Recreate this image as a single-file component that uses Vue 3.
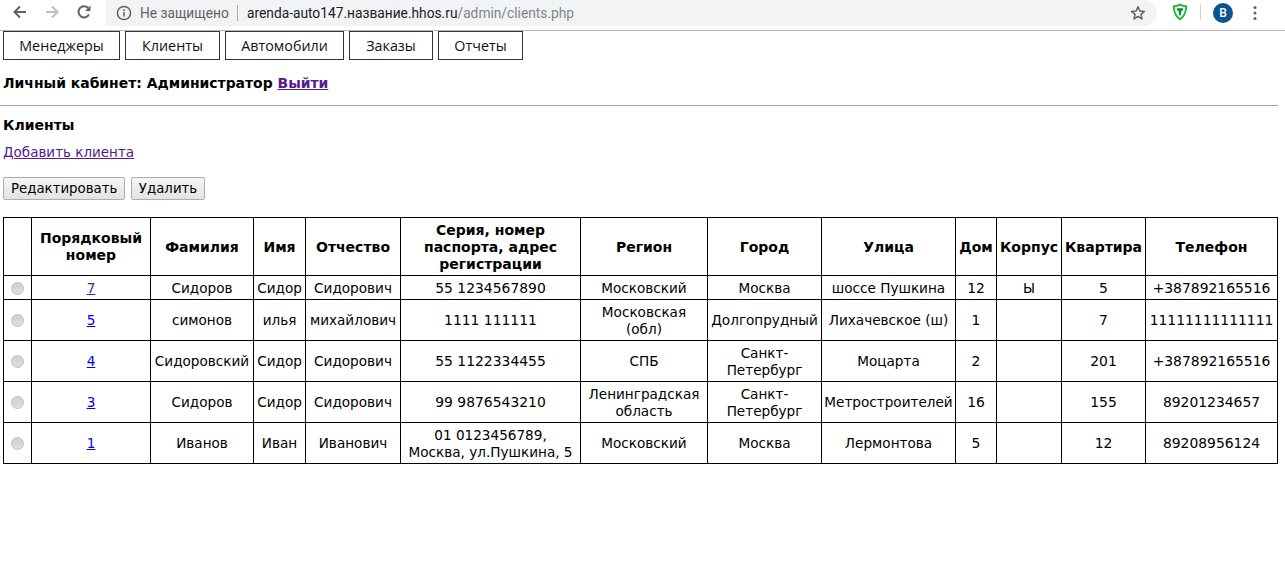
<script setup>
const tabs = [
  { label: 'Менеджеры', width: 117 },
  { label: 'Клиенты', width: 95 },
  { label: 'Автомобили', width: 119 },
  { label: 'Заказы', width: 84 },
  { label: 'Отчеты', width: 85 }
]
const colWidths = [28, 119, 103, 52, 95, 180, 127, 114, 134, 41, 65, 84, 132]
const headers = ['', 'Порядковый номер', 'Фамилия', 'Имя', 'Отчество', 'Серия, номер паспорта, адрес регистрации', 'Регион', 'Город', 'Улица', 'Дом', 'Корпус', 'Квартира', 'Телефон']
const rows = [
  { id: '7', visited: true, cells: ['Сидоров', 'Сидор', 'Сидорович', '55 1234567890', 'Московский', 'Москва', 'шоссе Пушкина', '12', 'Ы', '5', '+387892165516'] },
  { id: '5', cells: ['симонов', 'илья', 'михайлович', '1111 111111', 'Московская\n(обл)', 'Долгопрудный', 'Лихачевское (ш)', '1', '', '7', '11111111111111'] },
  { id: '4', cells: ['Сидоровский', 'Сидор', 'Сидорович', '55 1122334455', 'СПБ', 'Санкт-Петербург', 'Моцарта', '2', '', '201', '+387892165516'] },
  { id: '3', cells: ['Сидоров', 'Сидор', 'Сидорович', '99 9876543210', 'Ленинградская область', 'Санкт-Петербург', 'Метростроителей', '16', '', '155', '89201234657'] },
  { id: '1', cells: ['Иванов', 'Иван', 'Иванович', '01 0123456789,\nМосква, ул.Пушкина, 5', 'Московский', 'Москва', 'Лермонтова', '5', '', '12', '89208956124'] }
]
const isNumeric = (c) => /^[\d +]+$/.test(c)
</script>

<template>
  <div class="page">
    <header class="chrome">
      <div class="navicons">
        <svg width="16" height="16" viewBox="0 0 16 16" class="ic"><path d="M14 8H3M8 2.5 2.5 8 8 13.5" fill="none" stroke="#5f6368" stroke-width="2"/></svg>
        <svg width="16" height="16" viewBox="0 0 16 16" class="ic"><path d="M2 8h11M8 2.5 13.5 8 8 13.5" fill="none" stroke="#bcbec1" stroke-width="2"/></svg>
        <svg width="16" height="16" viewBox="0 0 16 16" class="ic"><path d="M13 10.5A5.6 5.6 0 1 1 12.2 4" fill="none" stroke="#5f6368" stroke-width="2"/><path d="M14.5 1.5v5.5H9z" fill="#5f6368"/></svg>
      </div>
      <div class="omnibox">
        <svg width="16" height="16" viewBox="0 0 16 16" class="info"><circle cx="8" cy="8" r="6.6" fill="none" stroke="#5f6368" stroke-width="1.5"/><path d="M7.2 7h1.6v4.6H7.2zM7.2 4.3h1.6v1.6H7.2z" fill="#5f6368"/></svg>
        <span class="insecure">Не защищено</span>
        <span class="divider"></span>
        <span class="url"><span class="host">arenda-auto147.название.hhos.ru</span>/admin/clients.php</span>
        <svg width="16" height="16" viewBox="0 0 16 16" class="star"><path d="M8 1.8 9.8 6l4.6.4-3.5 3 1.1 4.5L8 11.5l-4 2.4 1.1-4.5-3.5-3L6.200 6z" fill="none" stroke="#5f6368" stroke-width="1.5" stroke-linejoin="round"/></svg>
      </div>
      <div class="ext">
        <svg width="16" height="18" viewBox="0 0 16 18" class="shield"><path d="M.8 2.600C3.500 2.500 5.500 1.800 8 .6c2.500 1.200 4.500 1.900 7.200 2C15.200 9 13 14.500 8 17.400 3 14.500.8 9 .8 2.600z" fill="#22b83c"/><path d="M2.800 4.200c1.800-.1 3.500-.6 5.200-1.400 1.700.8 3.400 1.300 5.200 1.400 0 4-1.500 8.200-5.200 10.800C4.300 12.400 2.800 8.200 2.800 4.200z" fill="#e9f8ec"/><path d="M5 5.200h6v2.200H9.500L8.600 12.500H7.400L6.500 7.400H5z" fill="#1f7d4a"/></svg>
        <span class="sep"></span>
        <span class="avatar">В</span>
        <svg width="4" height="16" viewBox="0 0 4 16" class="dots"><circle cx="2" cy="2.500" r="1.500"/><circle cx="2" cy="8" r="1.500"/><circle cx="2" cy="13.500" r="1.500"/></svg>
      </div>
    </header>

    <nav class="tabs">
      <a v-for="t in tabs" :key="t.label" class="tab" :style="{ width: t.width + 'px' }">{{ t.label }}</a>
    </nav>

    <p class="cabinet">Личный кабинет: Администратор <a href="#" class="visited">Выйти</a></p>
    <hr class="rule" />
    <p class="title">Клиенты</p>
    <p class="add"><a href="#" class="visited">Добавить клиента</a></p>
    <div class="actions">
      <button class="btn">Редактировать</button>
      <button class="btn">Удалить</button>
    </div>

    <table class="grid">
      <colgroup>
        <col v-for="(w, i) in colWidths" :key="i" :style="{ width: w + 'px' }" />
      </colgroup>
      <thead>
        <tr><th v-for="(h, i) in headers" :key="i">{{ h }}</th></tr>
      </thead>
      <tbody>
        <tr v-for="r in rows" :key="r.id">
          <td><input type="radio" disabled class="radio" /></td>
          <td><a href="#" :class="r.visited ? 'visited' : 'fresh'">{{ r.id }}</a></td>
          <td v-for="(c, i) in r.cells" :key="i" :class="{ num: isNumeric(c) }">{{ c }}</td>
        </tr>
      </tbody>
    </table>
  </div>
</template>

<style scoped>
.page {
  width: 1285px;
  height: 578px;
  overflow: hidden;
  background: #fff;
  font-family: "DejaVu Sans", Verdana, sans-serif;
  font-size: 13.33px;
  line-height: 17px;
  color: #000;
}
.chrome {
  height: 30px;
  border-bottom: 1px solid #b7b7b7;
  display: flex;
  box-sizing: content-box;
  font-family: Roboto, "Liberation Sans", sans-serif;
}
.navicons {
  width: 106px;
  display: flex;
  align-items: flex-start;
  padding: 4px 0 0 12px;
  gap: 16px;
  box-sizing: border-box;
}
.ic { display: block; }
.omnibox {
  width: 1051px;
  height: 26px;
  background: #f1f3f4;
  border-radius: 0 13px 13px 0;
  display: flex;
  align-items: center;
  font-size: 13.75px;
  color: #80868b;
  padding-left: 10px;
  box-sizing: border-box;
}
.info { margin-right: 8px; }
.insecure { color: #5f6368; width: 97px; white-space: nowrap; }
.divider { width: 1px; height: 16px; background: #a8abae; margin-right: 9px; }
.url { white-space: nowrap; flex: 1; }
.host { color: #202124; }
.star { margin-right: 11px; }
.ext {
  flex: 1;
  display: flex;
  align-items: flex-start;
  padding: 3px 0 0 15px;
}
.shield { display: block; }
.sep { width: 1px; height: 16px; background: #d0d2d4; margin: 1px 12px 0 12px; }
.avatar {
  width: 20px;
  height: 20px;
  border-radius: 50%;
  background: #0b5394;
  color: #fff;
  font-size: 12px;
  font-weight: 500;
  line-height: 20px;
  text-align: center;
  font-family: Roboto, sans-serif;
}
.dots { fill: #5f6368; margin: 2px 0 0 20px; }
.tabs {
  display: flex;
  gap: 5px;
  padding-left: 3px;
  height: 30px;
}
.tab {
  box-sizing: border-box;
  height: 29px;
  border: 1px solid #333;
  display: flex;
  align-items: center;
  justify-content: center;
  font-family: "Open Sans", "Noto Sans", sans-serif;
  font-size: 14.3px;
  color: #111;
}
p { margin: 0; }
.cabinet {
  margin: 14px 0 0 3px;
  font-weight: 700;
  font-size: 13.95px;
}
.visited { color: #551a8b; text-decoration: underline; }
.fresh { color: #0000ee; text-decoration: underline; }
.rule {
  margin: 13px 0 0 0;
  width: 1278px;
  height: 1px;
  border: 0;
  background: #a0a0a0;
}
.title { margin: 11px 0 0 3px; font-weight: 700; font-size: 14px; }
.add { margin: 10px 0 0 3px; font-size: 13.5px; }
.actions { margin: 16px 0 0 3px; display: flex; gap: 6px; }
.btn {
  height: 23px;
  padding: 0 7px;
  font: 13.33px "DejaVu Sans", Verdana, sans-serif;
  color: #000;
  border: 1px solid #adadad;
  border-radius: 2px;
  background: linear-gradient(#f5f5f5, #e3e3e3);
}
.btn + .btn { padding: 0 6.5px; }
.grid {
  margin: 17px 0 0 3px;
  width: 1275px;
  table-layout: fixed;
  border-collapse: collapse;
}
.grid th, .grid td {
  border: 1px solid #000;
  padding: 3.6px 2px 2.4px;
  text-align: center;
  font-size: 13.6px;
  line-height: 17px;
  white-space: pre-line;
}
.grid td.num { font-size: 13.9px; }
.grid th { font-weight: 700; font-size: 14px; }
.radio {
  appearance: none;
  display: block;
  width: 13px;
  height: 13px;
  margin: 0 auto;
  border-radius: 50%;
  border: 1px solid #c2c2c2;
  background: linear-gradient(#d0d0d0, #dedede);
  box-sizing: border-box;
}
</style>
